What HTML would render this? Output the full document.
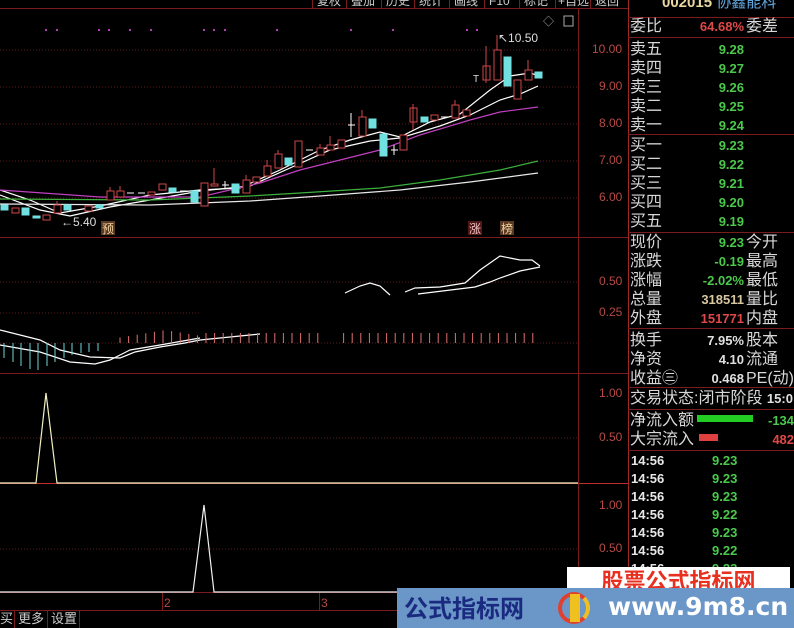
<!DOCTYPE html>
<html><head><meta charset="utf-8"><style>
*{margin:0;padding:0;box-sizing:border-box}
body{width:794px;height:628px;background:#000;overflow:hidden;position:relative;font-family:"Liberation Sans","Noto Sans CJK SC",sans-serif}
.a{position:absolute;white-space:nowrap}
.cn{font-size:16px;color:#d8d8d8;line-height:18px}
.num{font-size:13px;font-weight:bold;line-height:18px;text-align:right}
.g{color:#4cc84c}.r{color:#e04848}.w{color:#e0e0e0}.y{color:#d8c8a0}
.ax{font-size:12px;color:#b84a44}
</style></head><body>
<svg class="a" style="left:0;top:0" width="794" height="628">
<g stroke="#7a1c1c" stroke-width="1">
<line x1="0" y1="8.5" x2="628" y2="8.5"/>
<line x1="0" y1="237.5" x2="628" y2="237.5"/>
<line x1="0" y1="373.5" x2="628" y2="373.5"/>
<line x1="0" y1="483.5" x2="628" y2="483.5" stroke="#c03030"/>
<line x1="0" y1="592.5" x2="628" y2="592.5"/>
<line x1="0" y1="610.5" x2="628" y2="610.5"/>
<line x1="578.5" y1="8" x2="578.5" y2="592"/>
<line x1="628.5" y1="0" x2="628.5" y2="628" stroke="#a02828"/>
<line x1="628" y1="17.5" x2="794" y2="17.5"/>
<line x1="628" y1="37.5" x2="794" y2="37.5"/>
<line x1="628" y1="134.5" x2="794" y2="134.5"/>
<line x1="628" y1="232.5" x2="794" y2="232.5"/>
<line x1="628" y1="328.5" x2="794" y2="328.5"/>
<line x1="628" y1="387.5" x2="794" y2="387.5"/>
<line x1="628" y1="409.5" x2="794" y2="409.5"/>
<line x1="628" y1="450.5" x2="794" y2="450.5"/>
<line x1="162.5" y1="592" x2="162.5" y2="610"/><line x1="319.5" y1="592" x2="319.5" y2="610"/>
<line x1="14.5" y1="610" x2="14.5" y2="628"/><line x1="47.5" y1="610" x2="47.5" y2="628"/><line x1="79.5" y1="610" x2="79.5" y2="628"/>
</g>
<g stroke="#5a1a1a" stroke-dasharray="1,2">
<line x1="0" y1="50" x2="578" y2="50"/><line x1="0" y1="87" x2="578" y2="87"/><line x1="0" y1="124" x2="578" y2="124"/><line x1="0" y1="161" x2="578" y2="161"/><line x1="0" y1="198" x2="578" y2="198"/>
<line x1="0" y1="282" x2="578" y2="282"/><line x1="0" y1="313" x2="200" y2="313"/><line x1="0" y1="343" x2="578" y2="343"/>
<line x1="0" y1="438" x2="578" y2="438"/><line x1="0" y1="549" x2="578" y2="549"/>
</g>
<g fill="#b040b0"><rect x="45" y="29" width="2" height="2"/><rect x="56" y="29" width="2" height="2"/><rect x="98" y="29" width="2" height="2"/><rect x="108" y="29" width="2" height="2"/><rect x="129" y="29" width="2" height="2"/><rect x="150" y="29" width="2" height="2"/><rect x="203" y="29" width="2" height="2"/><rect x="213" y="29" width="2" height="2"/><rect x="224" y="29" width="2" height="2"/><rect x="276" y="29" width="2" height="2"/><rect x="350" y="29" width="2" height="2"/><rect x="392" y="29" width="2" height="2"/><rect x="466" y="29" width="2" height="2"/><rect x="476" y="29" width="2" height="2"/></g>
<g fill="none" stroke-width="1.2">
<polyline stroke="#fff" points="0,190 30,200 60,213 100,206 150,195 200,190 240,188 280,170 320,150 350,140 380,132 400,137 430,122 460,114 490,90 510,76 530,73 540,76"/>
<polyline stroke="#fff" points="0,195 40,210 70,216 110,207 150,200 200,191 250,186 290,168 330,150 370,141 400,138 440,126 470,115 500,100 520,94 538,86"/>
<polyline stroke="#c040c0" points="0,190 100,197 200,197 260,183 300,170 340,160 380,150 420,135 470,120 500,112 538,107"/>
<polyline stroke="#3cb03c" points="0,199 150,200 250,196 300,193 380,188 440,180 500,170 538,161"/>
<polyline stroke="#e8e8e8" points="0,204 150,205 250,201 320,196 400,190 470,182 538,173"/>
</g>
<g stroke-width="1">
<g stroke="#d04848" fill="#000">
<rect x="12" y="208" width="7" height="5"/><rect x="43" y="215" width="7" height="5"/><rect x="54" y="205" width="7" height="8"/><line x1="57" y1="201" x2="57" y2="205"/><rect x="85" y="206" width="7" height="5"/><rect x="107" y="191" width="7" height="9"/><line x1="110" y1="187" x2="110" y2="191"/><rect x="117" y="191" width="7" height="6"/><line x1="120" y1="186" x2="120" y2="191"/><rect x="148" y="192" width="7" height="3"/><rect x="159" y="184" width="7" height="6"/><rect x="201" y="183" width="7" height="23"/><line x1="214" y1="168" x2="214" y2="185"/><rect x="211" y="184" width="7" height="2"/><rect x="243" y="180" width="7" height="13"/><line x1="246" y1="175" x2="246" y2="180"/><rect x="253" y="177" width="7" height="5"/><rect x="264" y="166" width="7" height="10"/><line x1="267" y1="160" x2="267" y2="166"/><rect x="275" y="154" width="7" height="14"/><line x1="278" y1="150" x2="278" y2="154"/><rect x="295" y="141" width="7" height="26"/><rect x="317" y="148" width="7" height="7"/><line x1="320" y1="144" x2="320" y2="148"/><rect x="327" y="145" width="7" height="5"/><line x1="330" y1="136" x2="330" y2="145"/><rect x="338" y="140" width="7" height="8"/><rect x="359" y="117" width="7" height="19"/><line x1="362" y1="110" x2="362" y2="117"/><rect x="400" y="135" width="7" height="15"/><rect x="410" y="108" width="7" height="14"/><line x1="413" y1="104" x2="413" y2="130"/><rect x="431" y="115" width="7" height="5"/><rect x="452" y="105" width="7" height="13"/><line x1="455" y1="100" x2="455" y2="105"/><rect x="463" y="110" width="7" height="6"/><rect x="483" y="66" width="7" height="14"/><line x1="486" y1="46" x2="486" y2="83"/><rect x="494" y="50" width="7" height="30"/><line x1="497" y1="35" x2="497" y2="50"/><rect x="514" y="80" width="7" height="19"/><rect x="525" y="70" width="7" height="10"/><line x1="528" y1="60" x2="528" y2="70"/>
</g>
<g fill="#70e0e0" stroke="#70e0e0">
<rect x="1" y="205" width="7" height="5"/><rect x="22" y="208" width="7" height="7"/><rect x="33" y="216" width="7" height="2"/><rect x="64" y="205" width="7" height="5"/><rect x="96" y="205" width="7" height="3"/><rect x="169" y="188" width="7" height="4"/><rect x="191" y="191" width="7" height="11"/><rect x="232" y="184" width="7" height="9"/><rect x="285" y="158" width="7" height="7"/><rect x="369" y="119" width="7" height="9"/><rect x="380" y="134" width="7" height="22"/><rect x="421" y="117" width="7" height="5"/><rect x="504" y="57" width="7" height="29"/><rect x="535" y="72" width="7" height="6"/>
</g>
<g stroke="#fff"><line x1="127" y1="193" x2="134" y2="193"/><line x1="138" y1="193" x2="145" y2="193"/><line x1="180" y1="191" x2="187" y2="191"/><line x1="222" y1="185" x2="229" y2="185"/><line x1="225" y1="181" x2="225" y2="189"/><line x1="306" y1="150" x2="313" y2="150"/><line x1="348" y1="125" x2="355" y2="125"/><line x1="351" y1="113" x2="351" y2="137"/><line x1="391" y1="150" x2="398" y2="150"/><line x1="394" y1="145" x2="394" y2="155"/><line x1="441" y1="117" x2="448" y2="117"/></g>
</g>
<g fill="none" stroke="#fff" stroke-width="1.2">
<polyline points="345,293 360,286 370,283 380,286 390,295"/>
<polyline points="405,292 415,288 440,287 465,283 480,270 500,256 520,260 532,260 540,266"/>
<polyline points="418,294 475,287 490,282 500,278 520,271 540,267"/>
<polyline points="0,330 40,340 60,350 90,357 120,358 135,352 160,347 185,343 200,340 230,337 260,334"/>
<polyline points="0,345 40,352 70,362 95,364 110,360 130,350 160,345 200,338"/>
<polyline fill="none" stroke="#f0f0c0" points="0,483 36,483 46,393 57,483 578,483"/>
<polyline fill="none" stroke="#f0f0f0" points="0,592 193,592 204,505 214,592 578,592"/>
</g>
<g stroke="#70d8d8"><line x1="4" y1="343" x2="4" y2="358"/><line x1="13" y1="343" x2="13" y2="362"/><line x1="21" y1="343" x2="21" y2="366"/><line x1="30" y1="343" x2="30" y2="369"/><line x1="38" y1="343" x2="38" y2="370"/><line x1="47" y1="343" x2="47" y2="366"/><line x1="55" y1="343" x2="55" y2="362"/><line x1="64" y1="343" x2="64" y2="358"/><line x1="72" y1="343" x2="72" y2="355"/><line x1="81" y1="343" x2="81" y2="353"/><line x1="89" y1="343" x2="89" y2="352"/><line x1="98" y1="343" x2="98" y2="351"/></g>
<g stroke="#e07070" id="rs"></g>
<text x="61" y="226" fill="#ddd" font-size="12" font-family="Liberation Sans">←5.40</text>
<text x="498" y="42" fill="#ddd" font-size="12" font-family="Liberation Sans">↖10.50</text>
<text x="473" y="82" fill="#ddd" font-size="10">T</text>
<text x="543" y="25" fill="#aaa" font-size="11">◇</text>
<rect x="564" y="16" width="9" height="10" fill="none" stroke="#aaa"/>
<rect x="101" y="221" width="14" height="14" fill="#5a3a20"/><text x="102" y="233" fill="#f0d0a0" font-size="12" font-family="Noto Sans CJK SC">预</text>
<rect x="468" y="221" width="14" height="14" fill="#501818"/><text x="469" y="233" fill="#f0c0c0" font-size="12" font-family="Noto Sans CJK SC">涨</text>
<rect x="500" y="221" width="14" height="14" fill="#5a3a20"/><text x="501" y="233" fill="#f0d0a0" font-size="12" font-family="Noto Sans CJK SC">榜</text>
<rect x="697" y="415" width="56" height="7" fill="#22cc22"/>
<rect x="699" y="434" width="19" height="7" fill="#e04040"/>
</svg>
<script>
var g=document.getElementById('rs'),s='';
for(var x=120;x<540;x+=8.6){if(x>320&&x<340)continue;s+='<line x1="'+x+'" y1="343" x2="'+x+'" y2="'+(x<200?330+Math.abs(x-165)/6:333)+'"/>';}
g.innerHTML=s;
</script>
<div class="a" style="left:312px;top:-6px;font-size:12px;color:#ccc;font-family:'Liberation Sans','Noto Sans CJK SC',sans-serif;line-height:14px">
<span style="display:inline-block;width:34px;border-left:1px solid #7a1c1c;padding-left:4px">复权</span><span style="display:inline-block;width:35px;border-left:1px solid #7a1c1c;padding-left:4px">叠加</span><span style="display:inline-block;width:33px;border-left:1px solid #7a1c1c;padding-left:4px">历史</span><span style="display:inline-block;width:35px;border-left:1px solid #7a1c1c;padding-left:4px">统计</span><span style="display:inline-block;width:35px;border-left:1px solid #7a1c1c;padding-left:4px">画线</span><span style="display:inline-block;width:35px;border-left:1px solid #7a1c1c;padding-left:4px">F10</span><span style="display:inline-block;width:36px;border-left:1px solid #7a1c1c;padding-left:4px">标记</span><span style="display:inline-block;width:35px;border-left:1px solid #7a1c1c;padding-left:2px">+自选</span><span style="display:inline-block;width:30px;border-left:1px solid #7a1c1c;padding-left:4px">返回</span></div>
<div class="a ax" style="left:592px;top:42px">10.00</div>
<div class="a ax" style="left:599px;top:79px">9.00</div>
<div class="a ax" style="left:599px;top:116px">8.00</div>
<div class="a ax" style="left:599px;top:153px">7.00</div>
<div class="a ax" style="left:599px;top:190px">6.00</div>
<div class="a ax" style="left:599px;top:274px">0.50</div>
<div class="a ax" style="left:599px;top:305px">0.25</div>
<div class="a ax" style="left:599px;top:386px">1.00</div>
<div class="a ax" style="left:599px;top:430px">0.50</div>
<div class="a ax" style="left:599px;top:498px">1.00</div>
<div class="a ax" style="left:599px;top:541px">0.50</div>
<div class="a ax" style="left:164px;top:596px">2</div>
<div class="a ax" style="left:321px;top:596px">3</div>
<div class="a" style="left:0;top:611px;font-size:13px;color:#ccc;line-height:16px">买</div>
<div class="a" style="left:18px;top:611px;font-size:13px;color:#ccc;line-height:16px">更多</div>
<div class="a" style="left:51px;top:611px;font-size:13px;color:#ccc;line-height:16px">设置</div>
<div class="a" style="left:662px;top:-5px;font-size:15px;font-weight:bold;color:#e8d8a0;line-height:16px">002015 <span style="color:#60a8e0;font-weight:normal">协鑫能科</span></div>
<div class="a cn" style="left:630px;top:18px">委比</div><div class="a num r" style="left:680px;top:18px;width:64px">64.68%</div><div class="a cn" style="left:746px;top:18px">委差</div>
<div class="a cn" style="left:630px;top:40px;line-height:19px">卖五<br>卖四<br>卖三<br>卖二<br>卖一</div>
<div class="a num g" style="left:700px;top:40px;width:44px;line-height:19px">9.28<br>9.27<br>9.26<br>9.25<br>9.24</div>
<div class="a cn" style="left:630px;top:136px;line-height:19px">买一<br>买二<br>买三<br>买四<br>买五</div>
<div class="a num g" style="left:700px;top:136px;width:44px;line-height:19px">9.23<br>9.22<br>9.21<br>9.20<br>9.19</div>
<div class="a cn" style="left:630px;top:233px;line-height:19px">现价<br>涨跌<br>涨幅<br>总量<br>外盘</div>
<div class="a num" style="left:670px;top:233px;width:74px;line-height:19px"><span class="g">9.23</span><br><span class="g">-0.19</span><br><span class="g">-2.02%</span><br><span class="y">318511</span><br><span class="r">151771</span></div>
<div class="a cn" style="left:746px;top:233px;line-height:19px">今开<br>最高<br>最低<br>量比<br>内盘</div>
<div class="a cn" style="left:630px;top:331px;line-height:19px">换手<br>净资<br>收益㊂</div>
<div class="a num w" style="left:670px;top:331px;width:74px;line-height:19px">7.95%<br>4.10<br>0.468</div>
<div class="a cn" style="left:746px;top:331px;line-height:19px">股本<br>流通<br>PE(动)</div>
<div class="a cn" style="left:630px;top:389px;line-height:19px">交易状态:闭市阶段 <span class="num w" style="font-size:13px">15:0</span></div>
<div class="a cn" style="left:630px;top:411px;line-height:19px">净流入额<br>大宗流入</div>
<div class="a num" style="left:768px;top:411px;line-height:19px"><span class="g">-134</span><br><span class="r">482</span></div>
<div class="a num" style="left:631px;top:452px;line-height:18px;text-align:left;color:#e8e8e8">14:56<br>14:56<br>14:56<br>14:56<br>14:56<br>14:56<br>14:56</div>
<div class="a num g" style="left:712px;top:452px;line-height:18px;text-align:left">9.23<br>9.23<br>9.23<br>9.22<br>9.23<br>9.22<br>9.23</div>
<div class="a" style="left:567px;top:567px;width:223px;height:24px;background:#fff;color:#e83020;font-size:22px;font-weight:bold;line-height:26px;text-align:center;font-family:'Noto Sans CJK SC',sans-serif">股票公式指标网</div>
<div class="a" style="left:397px;top:588px;width:397px;height:40px;background:#6a96c8"></div>
<div class="a" style="left:404px;top:590px;font-size:24px;font-weight:bold;color:#1a2a80;line-height:34px;font-family:'Noto Sans CJK SC',sans-serif">公式指标网</div>
<div class="a" style="left:558px;top:592px;width:32px;height:32px;border-radius:50%;border:4px solid #e04030;border-right-color:#f0c020;background:#6a96c8"></div>
<div class="a" style="left:570px;top:594px;width:10px;height:28px;background:#f0c020"></div>
<div class="a" style="left:608px;top:590px;font-size:25px;font-weight:bold;color:#fff;line-height:34px;font-family:'DejaVu Sans',sans-serif">www.9m8.cn</div>
</body></html>
